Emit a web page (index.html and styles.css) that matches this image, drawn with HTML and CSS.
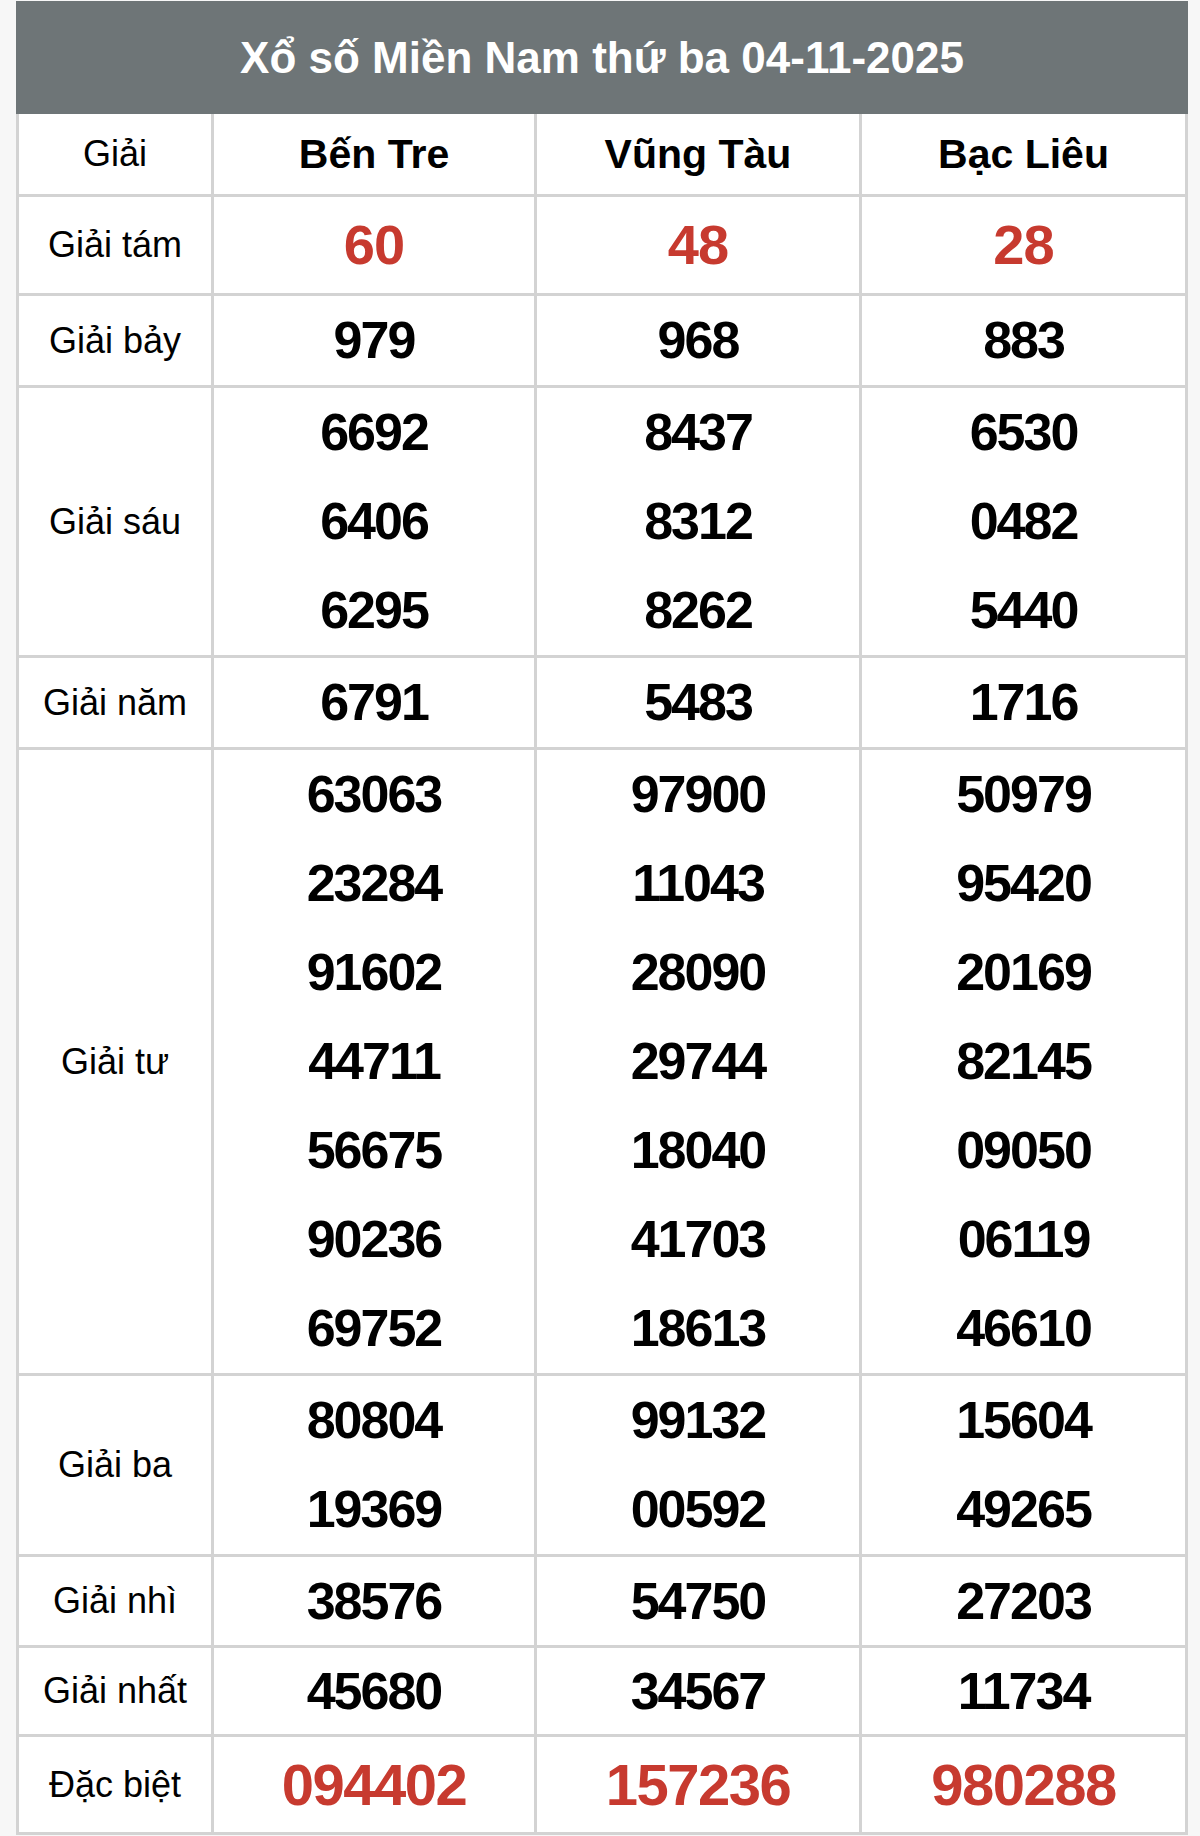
FILE: index.html
```html
<!DOCTYPE html>
<html lang="vi">
<head>
<meta charset="utf-8">
<title>Xổ số Miền Nam thứ ba 04-11-2025</title>
<link rel="stylesheet" href="styles.css">
</head>
<body>
<table class="kq">
  <colgroup>
    <col class="c-lbl">
    <col class="c-1">
    <col class="c-2">
    <col class="c-3">
  </colgroup>
  <thead>
    <tr><th colspan="4" class="title">Xổ số Miền Nam thứ ba 04-11-2025</th></tr>
    <tr class="prov">
      <td class="lbl">Giải</td>
      <th>Bến Tre</th>
      <th>Vũng Tàu</th>
      <th>Bạc Liêu</th>
    </tr>
  </thead>
  <tbody>
    <tr class="g8">
      <td class="lbl">Giải tám</td>
      <td><div class="n red">60</div></td>
      <td><div class="n red">48</div></td>
      <td><div class="n red">28</div></td>
    </tr>
    <tr>
      <td class="lbl">Giải bảy</td>
      <td><div class="n">979</div></td>
      <td><div class="n">968</div></td>
      <td><div class="n">883</div></td>
    </tr>
    <tr>
      <td class="lbl">Giải sáu</td>
      <td><div class="n">6692</div><div class="n">6406</div><div class="n">6295</div></td>
      <td><div class="n">8437</div><div class="n">8312</div><div class="n">8262</div></td>
      <td><div class="n">6530</div><div class="n">0482</div><div class="n">5440</div></td>
    </tr>
    <tr>
      <td class="lbl">Giải năm</td>
      <td><div class="n">6791</div></td>
      <td><div class="n">5483</div></td>
      <td><div class="n">1716</div></td>
    </tr>
    <tr>
      <td class="lbl">Giải tư</td>
      <td><div class="n">63063</div><div class="n">23284</div><div class="n">91602</div><div class="n">44711</div><div class="n">56675</div><div class="n">90236</div><div class="n">69752</div></td>
      <td><div class="n">97900</div><div class="n">11043</div><div class="n">28090</div><div class="n">29744</div><div class="n">18040</div><div class="n">41703</div><div class="n">18613</div></td>
      <td><div class="n">50979</div><div class="n">95420</div><div class="n">20169</div><div class="n">82145</div><div class="n">09050</div><div class="n">06119</div><div class="n">46610</div></td>
    </tr>
    <tr>
      <td class="lbl">Giải ba</td>
      <td><div class="n">80804</div><div class="n">19369</div></td>
      <td><div class="n">99132</div><div class="n">00592</div></td>
      <td><div class="n">15604</div><div class="n">49265</div></td>
    </tr>
    <tr class="g2">
      <td class="lbl">Giải nhì</td>
      <td><div class="n">38576</div></td>
      <td><div class="n">54750</div></td>
      <td><div class="n">27203</div></td>
    </tr>
    <tr class="g1">
      <td class="lbl">Giải nhất</td>
      <td><div class="n">45680</div></td>
      <td><div class="n">34567</div></td>
      <td><div class="n">11734</div></td>
    </tr>
    <tr class="db">
      <td class="lbl">Đặc biệt</td>
      <td><div class="n red">094402</div></td>
      <td><div class="n red">157236</div></td>
      <td><div class="n red">980288</div></td>
    </tr>
  </tbody>
</table>
</body>
</html>
```

FILE: styles.css
```css
html, body {
  margin: 0;
  padding: 0;
  background: #f7f7f7;
}

body {
  padding: 1px 15px 0 16px;
  font-family: "Liberation Sans", Arial, Helvetica, sans-serif;
  color: #000;
}

.kq {
  width: 1169px;
  border-collapse: collapse;
  table-layout: fixed;
  background: #fff;
}

.c-lbl { width: 195px; }
.c-1 { width: 323px; }
.c-2 { width: 325px; }
.c-3 { width: 326px; }

.kq td, .kq th {
  border: 3px solid #d3d3d3;
  padding: 0;
  text-align: center;
  vertical-align: middle;
}

.kq th.title {
  background: #6e7577;
  border-color: #6e7577;
  color: #fff;
  font-size: 44px;
  font-weight: bold;
  height: 107px;
}

.lbl {
  font-size: 36px;
  font-weight: normal;
}

.prov th {
  font-size: 41px;
  font-weight: bold;
  height: 80px;
}

.prov .lbl {
  height: 80px;
}

.n {
  height: 89px;
  line-height: 89px;
  font-size: 52px;
  font-weight: bold;
  letter-spacing: -2px;
}

.red {
  color: #c73a2f;
}

.g8 .n {
  height: 96px;
  line-height: 96px;
  font-size: 56px;
  letter-spacing: -1px;
}

.g2 .n {
  height: 88px;
  line-height: 88px;
}

.g1 .n {
  height: 86px;
  line-height: 86px;
}

.db .n {
  height: 95px;
  line-height: 95px;
  font-size: 58px;
  letter-spacing: -1.5px;
}
```
